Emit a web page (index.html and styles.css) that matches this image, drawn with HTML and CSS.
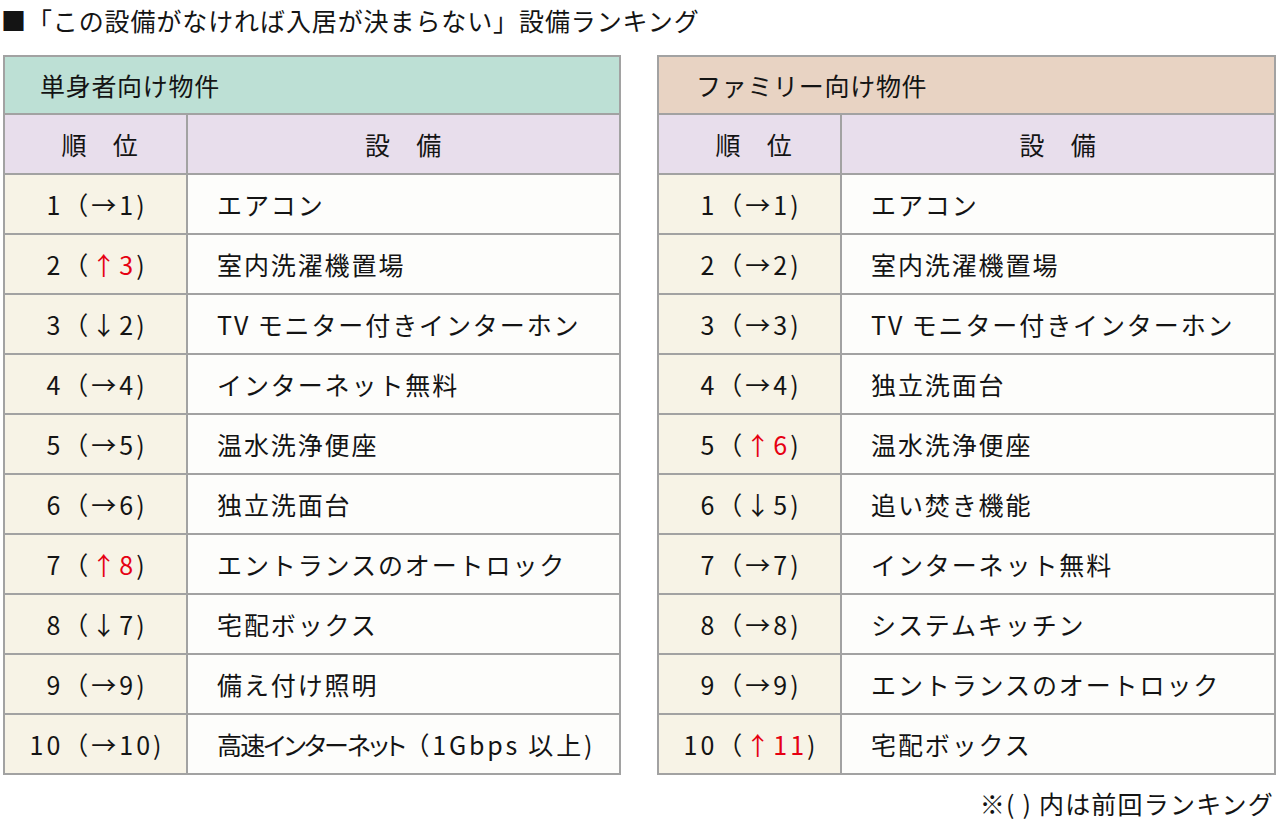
FILE: index.html
```html
<!DOCTYPE html>
<html lang="ja">
<head>
<meta charset="utf-8">
<title>設備ランキング</title>
<link rel="stylesheet" href="styles.css">
</head>
<body>
<div class="page">
  <h1 class="title">■「この設備がなければ入居が決まらない」設備ランキング</h1>
  <div class="tables">
    <table class="rank single">
      <colgroup><col class="col-rank"><col></colgroup>
      <thead>
        <tr><th colspan="2" class="cat">単身者向け物件</th></tr>
        <tr><th class="sub sub-rank">順　位</th><th class="sub">設　備</th></tr>
      </thead>
      <tbody>
        <tr><td class="r">1（→1)</td><td class="i">エアコン</td></tr>
        <tr><td class="r">2（<span class="up">↑3</span>)</td><td class="i">室内洗濯機置場</td></tr>
        <tr><td class="r">3（↓2)</td><td class="i">TV モニター付きインターホン</td></tr>
        <tr><td class="r">4（→4)</td><td class="i">インターネット無料</td></tr>
        <tr><td class="r">5（→5)</td><td class="i">温水洗浄便座</td></tr>
        <tr><td class="r">6（→6)</td><td class="i">独立洗面台</td></tr>
        <tr><td class="r">7（<span class="up">↑8</span>)</td><td class="i">エントランスのオートロック</td></tr>
        <tr><td class="r">8（↓7)</td><td class="i">宅配ボックス</td></tr>
        <tr><td class="r">9（→9)</td><td class="i">備え付け照明</td></tr>
        <tr><td class="r">10（→10)</td><td class="i tight"><span class="palt">高速インターネット</span>（1Gbps 以上)</td></tr>
      </tbody>
    </table>
    <table class="rank family">
      <colgroup><col class="col-rank"><col></colgroup>
      <thead>
        <tr><th colspan="2" class="cat">ファミリー向け物件</th></tr>
        <tr><th class="sub sub-rank">順　位</th><th class="sub">設　備</th></tr>
      </thead>
      <tbody>
        <tr><td class="r">1（→1)</td><td class="i">エアコン</td></tr>
        <tr><td class="r">2（→2)</td><td class="i">室内洗濯機置場</td></tr>
        <tr><td class="r">3（→3)</td><td class="i">TV モニター付きインターホン</td></tr>
        <tr><td class="r">4（→4)</td><td class="i">独立洗面台</td></tr>
        <tr><td class="r">5（<span class="up">↑6</span>)</td><td class="i">温水洗浄便座</td></tr>
        <tr><td class="r">6（↓5)</td><td class="i">追い焚き機能</td></tr>
        <tr><td class="r">7（→7)</td><td class="i">インターネット無料</td></tr>
        <tr><td class="r">8（→8)</td><td class="i">システムキッチン</td></tr>
        <tr><td class="r">9（→9)</td><td class="i">エントランスのオートロック</td></tr>
        <tr><td class="r">10（<span class="up">↑11</span>)</td><td class="i">宅配ボックス</td></tr>
      </tbody>
    </table>
  </div>
  <p class="note">※( ) 内は前回ランキング</p>
</div>
</body>
</html>
```
FILE: styles.css
```css
html, body {
  margin: 0;
  padding: 0;
  background: #ffffff;
}
body {
  font-family: "Noto Sans CJK JP", "Noto Sans", sans-serif;
  color: #141414;
  font-size: 25px;
}
.page {
  width: 1280px;
  height: 824px;
  padding: 0 0 0 3px;
  box-sizing: border-box;
}
.title {
  margin: 0 0 0 -2px;
  padding-top: 6px;
  height: 55px;
  box-sizing: border-box;
  font-size: 25px;
  font-weight: normal;
  letter-spacing: 0.9px;
  line-height: 28px;
}
.tables {
  display: flex;
  gap: 36px;
  align-items: flex-start;
}
.rank {
  border-collapse: separate;
  border-spacing: 0;
  border-top: 2px solid #a2a2a2;
  border-left: 2px solid #a2a2a2;
  table-layout: fixed;
}
.single { width: 618px; }
.family { width: 619px; }
.col-rank { width: 183px; }
.rank th, .rank td {
  border-right: 2px solid #a2a2a2;
  border-bottom: 2px solid #a2a2a2;
  padding: 0;
  font-weight: normal;
  letter-spacing: 0.7px;
  line-height: 28px;
}
.cat {
  height: 56px;
  text-align: left;
  padding-left: 35px !important;
}
.single .cat { background: #bde0d5; }
.family .cat { background: #e8d3c3; padding-left: 37px !important; }
.sub {
  height: 58px;
  background: #e8deec;
  text-align: center;
}
.rank .sub-rank { padding-left: 9px; }
.rank td { height: 58px; }
.rank .r {
  background: #f7f3e6;
  text-align: center;
  white-space: nowrap;
  letter-spacing: 3px;
  padding-left: 3px;
}
.rank .i {
  background: #fdfdfb;
  padding-left: 29px;
  white-space: nowrap;
  letter-spacing: 1.9px;
}
.rank .tight { letter-spacing: 2.8px; }
.palt {
  font-feature-settings: "palt" 1;
  letter-spacing: -1.8px;
}
.up { color: #e60012; }
.note {
  margin: 14px 6px 0 0;
  text-align: right;
  font-size: 25px;
  line-height: 28px;
  letter-spacing: 1.2px;
}
```
